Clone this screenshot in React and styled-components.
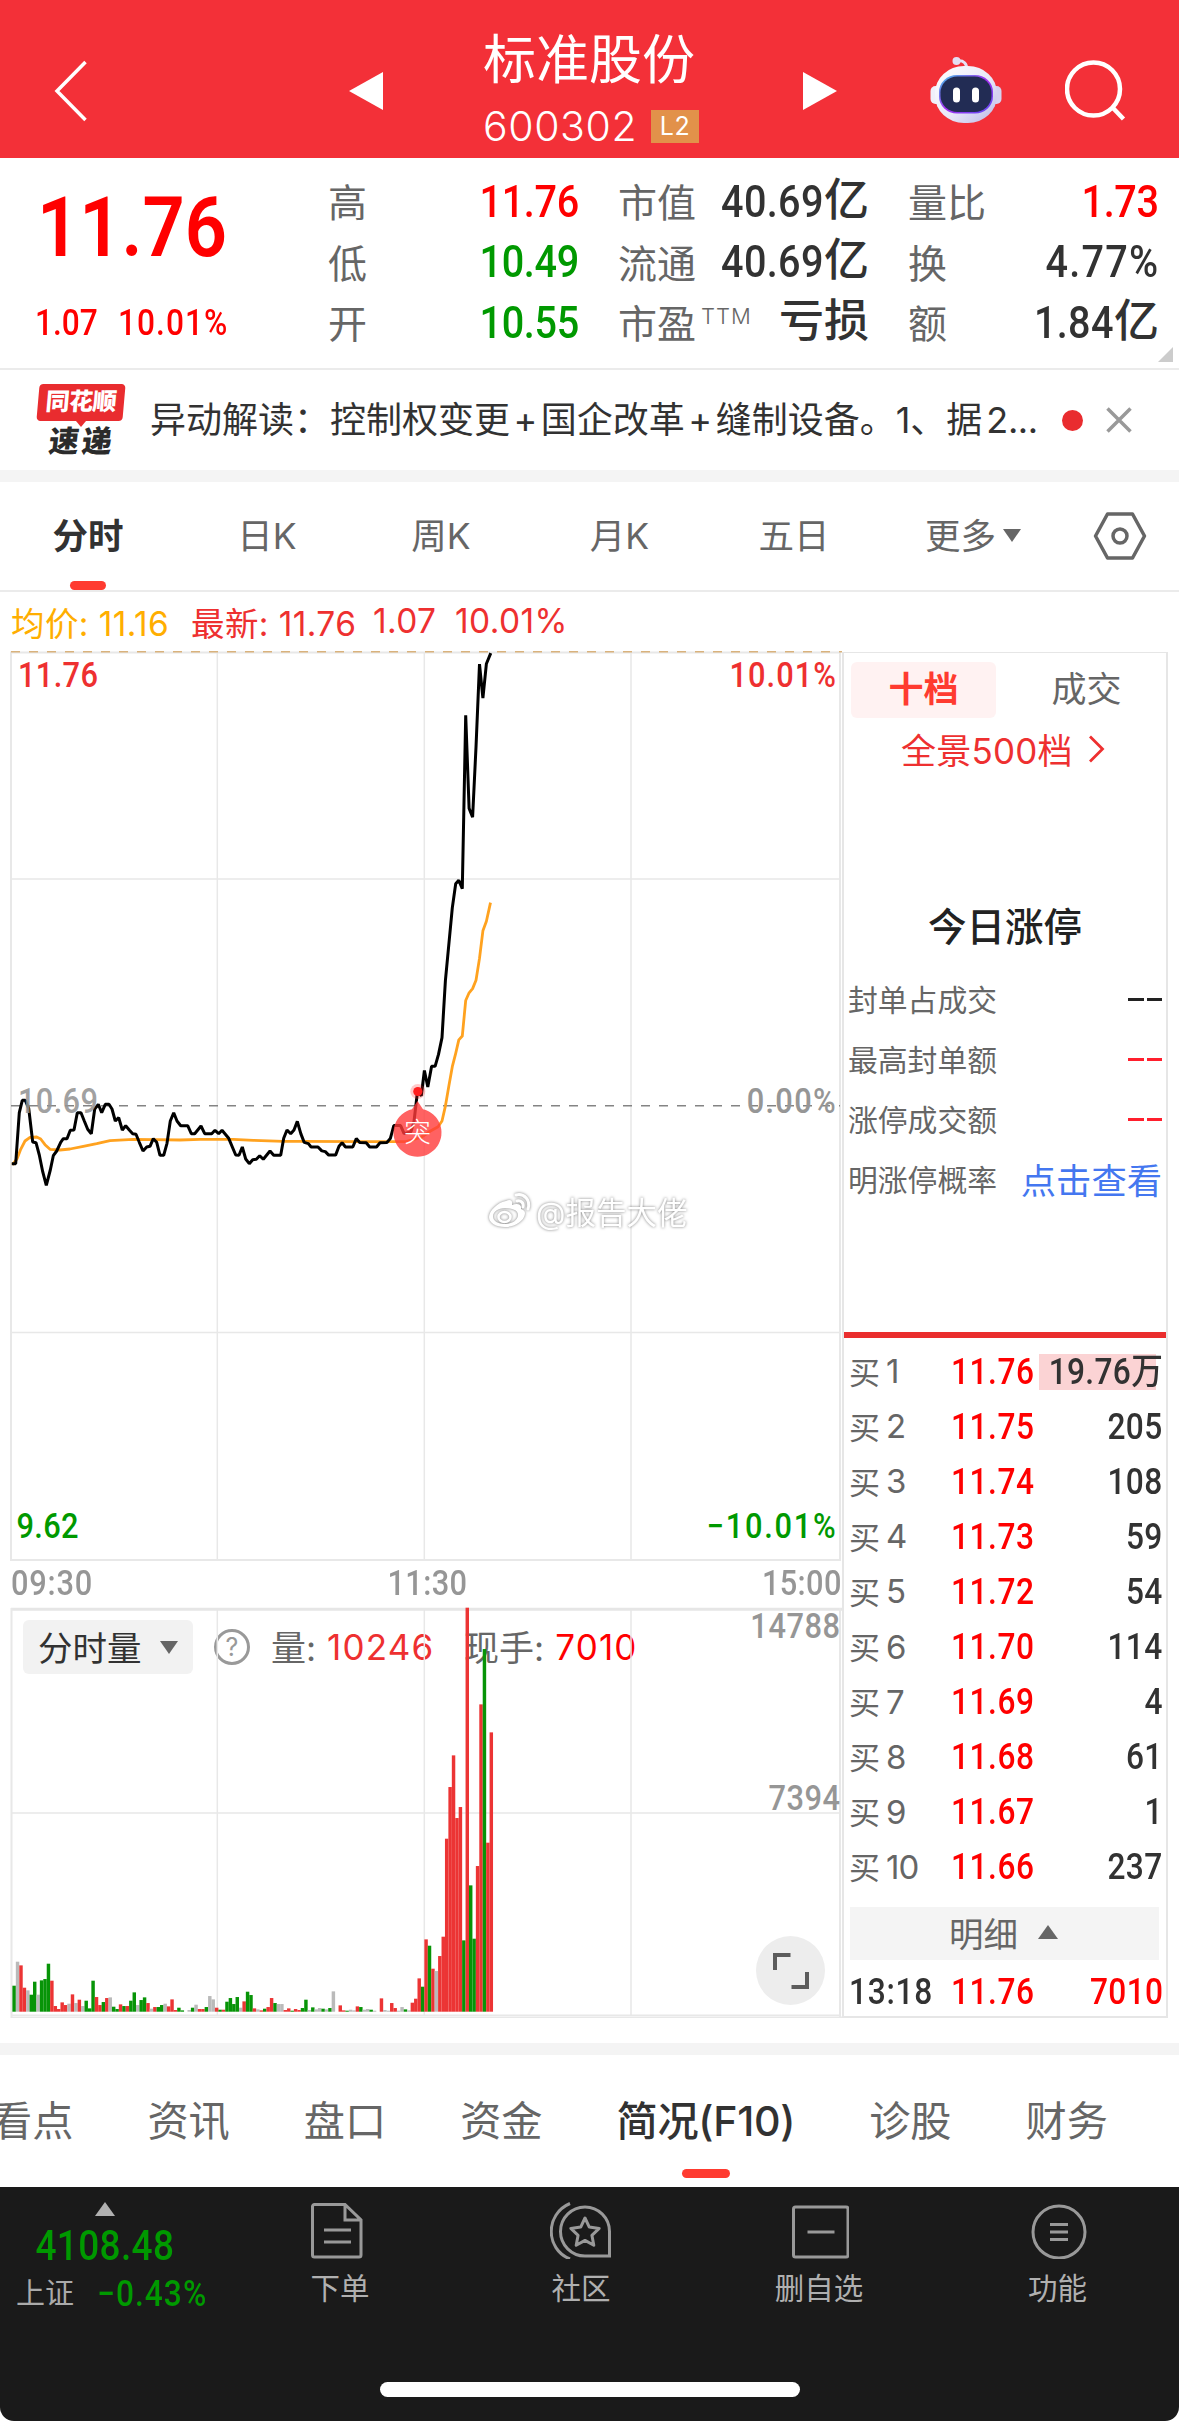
import React from "react";
import styled, { createGlobalStyle } from "styled-components";

const SANS = '"Inter", "Noto Sans CJK SC", sans-serif';
const DIN = '"Roboto", "Noto Sans CJK SC", sans-serif';
const C = {
  header: "#f33038",
  up: "#ff0000",
  red: "#ee3030",
  accent: "#ff3b30",
  down: "#009900",
  text: "#323232",
  sub: "#666666",
  mute: "#969696",
  line: "#e8e8e8",
  band: "#f4f4f4",
};

const Global = createGlobalStyle`
  * { box-sizing: border-box; }
  body { margin: 0; background: #fff; font-family: ${SANS}; color: ${C.text}; }
  svg { display: block; flex: none; }
`;

const Screen = styled.div`
  width: 1179px;
  height: 2421px;
  overflow: hidden;
  display: flex;
  flex-direction: column;
  background: #fff;
  white-space: nowrap;
`;

/* Narrow figures used for every quote number. */
const Din = styled.span`
  display: inline-block;
  font-family: ${DIN};
  font-size: ${(p) => p.$size || 36}px;
  font-weight: ${(p) => p.$weight || 500};
  letter-spacing: ${(p) => p.$spacing || 0}px;
  color: ${(p) => p.$color || "inherit"};
  transform: scaleX(0.88);
  transform-origin: ${(p) => p.$origin || "left"};
`;

/* ---------- header ---------- */
const Header = styled.header`
  height: 158px;
  flex: none;
  background: ${C.header};
  color: #fff;
  display: grid;
  grid-template-columns: 349px 34px 420px 34px 93px 72px 63px 64px;
  align-items: center;
  padding-top: 24px;
`;
const BackCell = styled.div`
  padding-left: 52px;
`;
const TitleStack = styled.div`
  width: 220px;
  margin: 0 auto;
  display: flex;
  flex-direction: column;
`;
const StockName = styled.h1`
  margin: 0;
  font-size: 53px;
  line-height: 70px;
  font-weight: 400;
`;
const CodeRow = styled.div`
  display: flex;
  align-items: center;
  justify-content: space-between;
  font-size: 41px;
  line-height: 62px;
  font-weight: 350;
  letter-spacing: 0.6px;
  padding-right: 4px;
`;
const LevelBadge = styled.span`
  width: 48px;
  height: 33px;
  background: #e2914a;
  font-size: 25px;
  line-height: 33px;
  font-weight: 400;
  text-align: center;
`;

/* ---------- quote board ---------- */
const Quote = styled.section`
  height: 212px;
  flex: none;
  display: flex;
  position: relative;
  border-bottom: 2px solid #ebebeb;
`;
const PriceBlock = styled.div`
  width: 328px;
  padding: 27px 0 0 37px;
  color: ${C.up};
`;
const BigPrice = styled.div`
  height: 84px;
  line-height: 84px;
  padding-top: 1px;
`;
const ChangeRow = styled.div`
  display: grid;
  grid-template-columns: 83px 1fr;
  margin: 36px 0 0 -2px;
  line-height: 36px;
`;
const StatGrid = styled.div`
  display: grid;
  grid-template-columns: 250px 250px 250px;
  grid-auto-rows: 60.5px;
  column-gap: 40px;
  padding-top: 12px;
`;
const Stat = styled.div`
  display: flex;
  align-items: center;
  justify-content: space-between;
`;
const StatLabel = styled.span`
  font-size: 39px;
  color: ${C.sub};
  display: flex;
`;
const Ttm = styled.span`
  font-size: 22px;
  line-height: 26px;
  margin: 10px 0 0 5px;
  font-weight: 300;
  letter-spacing: 1px;
`;
const StatValue = styled.span`
  display: flex;
  align-items: center;
  line-height: 52px;
  margin: 3px -1px 0 0;
  color: ${(p) => p.$color || C.text};
`;
const Unit = styled.span`
  font-size: 45px;
  font-weight: 500;
  margin-top: -4px;
`;
const Corner = styled.i`
  position: absolute;
  right: 6px;
  bottom: 6px;
  border-style: solid;
  border-width: 0 0 15px 15px;
  border-color: transparent transparent #ccc transparent;
`;

/* ---------- news ---------- */
const News = styled.section`
  height: 100px;
  flex: none;
  display: flex;
  align-items: center;
  padding-left: 36px;
`;
const NewsLogo = styled.div`
  width: 90px;
  display: flex;
  flex-direction: column;
  align-items: center;
  font-weight: 900;
`;
const LogoBox = styled.div`
  width: 86px;
  height: 37px;
  border-radius: 4px;
  background: #e92c2f;
  color: #fff;
  font-size: 24px;
  line-height: 36px;
  text-align: center;
  letter-spacing: -0.5px;
  transform: skewX(-5deg);
`;
const LogoTip = styled.i`
  border-style: solid;
  border-width: 6px 5px 0 5px;
  border-color: #e92c2f transparent transparent transparent;
`;
const LogoText = styled.div`
  font-size: 30px;
  line-height: 29px;
  letter-spacing: 3px;
  transform: skewX(-7deg);
  color: #2b2b2b;
  margin-left: 2px;
`;
const NewsText = styled.div`
  width: 886px;
  margin-left: 24px;
  font-size: 36px;
  line-height: 50px;
  color: ${C.text};
`;
const Plus = styled.span`
  margin: 0 3.5px;
`;
const Ellipsis = styled.span`
  margin-left: 4px;
  letter-spacing: -0.4px;
`;
const RedDot = styled.i`
  width: 21px;
  height: 21px;
  border-radius: 50%;
  background: #e92c2f;
  margin: 0 23px 0 26px;
`;
const Band = styled.div`
  height: 12px;
  flex: none;
  background: ${C.band};
`;

/* ---------- period tabs ---------- */
const PeriodTabs = styled.nav`
  height: 110px;
  flex: none;
  display: grid;
  grid-template-columns: 176px 182px 166px 191px 158px 200px 84px;
  align-items: center;
  border-bottom: 2px solid #ebebeb;
`;
const PeriodTab = styled.div`
  position: relative;
  height: 108px;
  padding-bottom: 5px;
  display: flex;
  align-items: center;
  justify-content: center;
  gap: 7px;
  font-size: 35.5px;
  font-weight: ${(p) => (p.$active ? 600 : 400)};
  color: ${(p) => (p.$active ? C.text : C.sub)};
`;
const Underline = styled.i`
  position: absolute;
  bottom: ${(p) => p.$bottom}px;
  left: 50%;
  width: ${(p) => p.$w}px;
  height: 9px;
  margin-left: ${(p) => -p.$w / 2}px;
  border-radius: 4.5px;
  background: ${C.accent};
`;
const Caret = styled.i`
  margin-top: ${(p) => (p.$up ? 0 : 3)}px;
  border-style: solid;
  border-width: ${(p) => (p.$up ? "0 10px 14px" : "13px 9.5px 0")};
  border-color: ${(p) =>
    p.$up
      ? `transparent transparent ${p.$color || C.sub}`
      : `${p.$color || C.sub} transparent transparent`};
`;

/* ---------- chart area ---------- */
const Legend = styled.div`
  height: 59px;
  flex: none;
  display: flex;
  align-items: center;
  padding: 0 0 1px 11px;
  font-size: 33.5px;
  letter-spacing: 0.4px;
  color: ${C.red};
`;
const LegendItem = styled.span`
  width: ${(p) => p.$w}px;
  color: ${(p) => p.$color || "inherit"};
`;
const Main = styled.section`
  height: 1392px;
  flex: none;
  display: flex;
`;
const Charts = styled.div`
  width: 842px;
  display: flex;
  flex-direction: column;
`;
const TimeAxis = styled.div`
  height: 46px;
  display: flex;
  justify-content: space-between;
  align-items: center;
  padding: 0 0 1px 11px;
  color: ${C.mute};
`;
const VolumeBox = styled.div`
  position: relative;
  height: 411px;
`;
const VolumeBar = styled.div`
  position: absolute;
  left: 23px;
  top: 13px;
  height: 54px;
  display: flex;
  align-items: center;
  font-size: 35px;
  color: ${C.sub};
`;
const Chip = styled.div`
  width: 170px;
  height: 54px;
  border-radius: 6px;
  background: #f2f2f2;
  display: flex;
  align-items: center;
  padding: 0 0 2px 15px;
  gap: 18px;
  font-size: 34.5px;
  color: ${C.text};
`;
const Help = styled.div`
  width: 36px;
  height: 36px;
  border: 3px solid #999;
  border-radius: 50%;
  margin: 0 21px 0 21px;
  font-size: 25px;
  line-height: 30px;
  text-align: center;
  color: #999;
`;
const VolLabel = styled.span`
  padding-bottom: 3px;
`;
const VolNumber = styled.span`
  color: ${(p) => p.$color};
  width: ${(p) => p.$w}px;
  margin-left: 11px;
  letter-spacing: 1.2px;
`;
const VolumeSvg = styled.svg`
  position: relative;
`;
const Expand = styled.div`
  position: absolute;
  right: 17px;
  bottom: 13px;
  width: 69px;
  height: 69px;
  border-radius: 50%;
  background: #ededed;
  display: flex;
  align-items: center;
  justify-content: center;
`;

/* ---------- order book ---------- */
const Book = styled.aside`
  width: 326px;
  height: 1366px;
  margin-top: 1px;
  border: 2px solid #e6e6e6;
  border-top-width: 1px;
  display: flex;
  flex-direction: column;
  > * { flex: none; }
`;
const BookTabs = styled.div`
  display: flex;
  gap: 18px;
  padding: 9px 0 0 7px;
`;
const BookTab = styled.div`
  width: 145px;
  height: 56px;
  border-radius: 6px;
  font-size: 35px;
  line-height: 55px;
  text-align: center;
  background: ${(p) => (p.$active ? "#fff2f2" : "transparent")};
  color: ${(p) => (p.$active ? C.accent : C.sub)};
  font-weight: ${(p) => (p.$active ? 600 : 400)};
`;
const PanoramaLink = styled.div`
  height: 64px;
  display: flex;
  align-items: center;
  gap: 15px;
  padding: 0 0 3px 57px;
  font-size: 35px;
  letter-spacing: 0.2px;
  color: ${C.red};
`;
const LimitTitle = styled.h2`
  margin: 120px 0 18px;
  font-size: 38.5px;
  line-height: 50px;
  font-weight: 500;
  text-align: center;
  color: #222;
`;
const LimitRow = styled.div`
  height: 60px;
  display: flex;
  align-items: center;
  justify-content: space-between;
  padding: 0 4px 4px 4px;
  font-size: 29.8px;
  color: ${C.sub};
`;
const Dashes = styled.span`
  display: flex;
  gap: 3px;
  margin-top: 2px;
  &::before,
  &::after {
    content: "";
    width: 15.5px;
    height: 3px;
    background: ${(p) => p.$color};
  }
`;
const LookLink = styled.a`
  font-size: 35.3px;
  color: #4477f0;
`;
const Divider = styled.hr`
  width: 322px;
  height: 6px;
  margin: 122px 0 6px;
  border: 0;
  background: #ea2e2e;
`;
const OrderRow = styled.div`
  height: ${(p) => (p.$last ? 56 : 55.1)}px;
  display: grid;
  grid-template-columns: 102px 86px 1fr;
  align-items: center;
  padding: ${(p) => (p.$last ? 8 : 0)}px 3px 0 5px;
`;
const Level = styled.span`
  display: flex;
  gap: 6px;
  align-items: center;
  font-size: 31px;
  padding-bottom: 3px;
  color: ${C.sub};
`;
const LevelNo = styled.span`
  font-size: 33px;
  padding-top: 2px;
  letter-spacing: -0.8px;
`;
const QtyCell = styled.span`
  min-width: 0;
  height: 36px;
  line-height: 36px;
  display: flex;
  justify-content: flex-end;
  margin-left: 2px;
  background: ${(p) =>
    p.$hot ? "linear-gradient(to right, #fbd3d4 117px, transparent 117px)" : "none"};
`;
const DetailBar = styled.div`
  height: 53px;
  margin: 12px 7px 0 6px;
  background: ${C.band};
  display: flex;
  align-items: center;
  justify-content: center;
  gap: 20px;
  font-size: 34.5px;
  color: ${C.sub};
  padding: 0 2px 2px 0;
`;

/* ---------- bottom ---------- */
const ContentTabs = styled.nav`
  height: 132px;
  flex: none;
  display: flex;
  gap: 74px;
  margin-left: -9px;
`;
const ContentTab = styled.div`
  position: relative;
  flex: none;
  line-height: 132px;
  font-size: 41.2px;
  font-weight: ${(p) => (p.$active ? 500 : 400)};
  color: ${(p) => (p.$active ? C.text : C.sub)};
  letter-spacing: ${(p) => (p.$active ? "-0.3px" : 0)};
`;
const Dock = styled.footer`
  height: 234px;
  flex: none;
  background: #1a1a1a;
  border-radius: 0 0 14px 14px;
  display: flex;
  flex-direction: column;
  align-items: center;
`;
const DockRow = styled.div`
  width: 1179px;
  height: 195px;
  display: grid;
  grid-template-columns: 220px 240px 242px 234px 243px;
`;
const IndexCell = styled.div`
  display: flex;
  flex-direction: column;
  align-items: center;
  padding: 15px 10px 0 0;
`;
const IndexValue = styled.div`
  margin-top: 9px;
  height: 42px;
  line-height: 42px;
  color: ${C.down};
`;
const IndexChange = styled.div`
  margin-top: 7px;
  width: 210px;
  padding-left: 16px;
  display: flex;
  align-items: center;
  gap: 23px;
  font-size: 29px;
  line-height: 40px;
  color: #aaa;
`;
const DockItem = styled.div`
  display: flex;
  flex-direction: column;
  align-items: center;
  padding-top: 12px;
  gap: 5px;
  font-size: 29.5px;
  line-height: 48px;
  color: #b0b0b0;
`;
const HomeBar = styled.div`
  width: 420px;
  height: 15px;
  border-radius: 7.5px;
  background: #fff;
`;

/* ---------- data ---------- */
const STATS = [
  ["高", "11.76", "", C.up], ["市值", "40.69", "亿"], ["量比", "1.73", "", C.up],
  ["低", "10.49", "", C.down], ["流通", "40.69", "亿"], ["换", "4.77%", ""],
  ["开", "10.55", "", C.down], ["市盈", "", "亏损"], ["额", "1.84", "亿"],
];

const ORDERS = [
  ["11.76", "19.76万"], ["11.75", "205"], ["11.74", "108"], ["11.73", "59"],
  ["11.72", "54"], ["11.70", "114"], ["11.69", "4"], ["11.68", "61"],
  ["11.67", "1"], ["11.66", "237"],
];

const PRICE =
  "13.3,512.7 15.7,512.7 19.3,461.7 22.3,449.3 25.3,449.3 28.7,457.3 32.7,491 36,491.7 39.3,504 42.7,520.7 46.3,534.3 50.3,519 53.3,504.7 56.7,500 60.7,491.3 63.3,487.7 67,487.7 70.3,479.3 74,479 77.3,461.7 81,461.7 84.3,470 87.7,478.3 91.3,482.7 94.7,458 98.3,453.3 101.7,461.7 105.3,453.3 109,453.3 112,458 115.3,470 118.7,466.7 122.3,479 125.7,474.7 129.3,479 132.7,482.7 136,483.3 139.3,491.3 143,500 146.7,496 150,495.3 153.3,487.7 156.7,491.3 160,504.3 163.7,504.3 167,492.3 170.3,470 173.7,461.7 177,470 180.7,474.7 187.7,474.7 191.3,482.7 194.7,482.7 201,475 204.7,482.7 211.7,482.7 215,479.3 218.7,482.7 222,479.3 228.7,487.3 235.7,504 239,504.3 242.3,496 245.7,508 249.3,512.7 252.7,508.7 256.3,508.3 259.7,504.7 263.3,508.3 270,500 273.7,504.3 280.7,504.3 283.7,487.3 287,479 290.7,482.7 294,479 297.3,470.4 300.8,482.6 304.2,491.4 308.4,492.6 311.1,496 318,496 321.8,499.9 325.3,500.6 328.7,504.1 335.6,504.1 339,495.3 342.1,491.8 345.5,496 352.8,496 356.3,487.6 359.7,491.4 366.2,491.8 369.7,496 376.5,496 380,491.8 386.9,491.4 390.3,487.6 393.8,474.6 400.6,474.6 404.1,482.6 411,480.7 414,470.4 417.5,440.5 421.3,444.7 424.4,419.5 427.8,436 431.6,415.3 435.1,415.3 438.5,403.4 442,386.6 445.4,329.6 452.3,256.9 455.7,232.8 458.8,229.3 462.3,237.7 465.7,64.4 469.1,157.4 472.6,166.2 476,96.1 479.5,13.1 482.9,47.2 486.4,12.7 490.2,3.5";

const AVERAGE =
  "13.3,512.7 17.3,507.3 20.7,498.3 25,490 30,486.3 36.7,486 40.7,488 45,493.7 50,498.3 60,499 70,498 83.3,495.3 96.7,492.7 110,489.7 133.3,488.3 153.3,488.7 180,489 200,488.3 233.3,488.3 253.3,489.3 283.3,490.3 300,490.3 363.5,490.7 405.6,490.7 420.9,486.5 430.5,480 438.1,475.7 442,470 445.4,455.1 448.9,434.8 452.3,415.7 455.7,402.3 458.8,388.9 462.3,385 465.7,349.5 469.1,341.8 472.6,337.6 476,329.2 479.5,307.4 482.9,279.8 486.4,270.3 490.2,253";

// One entry per minute: colour key (g down, r up, n flat) and height in thirds of a pixel.
const VOLUME =
  "g78 n150 r139 r72 n64 g51 g90 n51 g94 g98 g144 r93 r17 r8 r28 r20 n24 r52 n26 r36 n17 g33 g10 g93 r44 r20 g29 r41 n43 g15 g8 r22 g17 r17 g33 g58 n20 g35 g43 r26 n9 r14 g14 g20 n24 r16 r37 r5 g12 g4 n0 n5 g12 n21 r8 r8 g14 n47 n37 r12 g6 r6 g30 g41 g23 g44 n12 r31 g60 g50 r10 n7 r4 g9 r14 r41 g26 n23 n23 r5 r10 g3 r8 r5 g11 g36 n5 g13 n7 n11 g9 n7 g11 n61 n0 r19 r4 g3 n6 n4 r16 g14 n6 n8 g6 n3 n0 r40 n5 n3 r26 r11 n3 n14 g7 n4 r27 r39 r100 g75 r217 g198 r129 n122 r167 r225 r519 r674 r769 r581 r614 g214 r1212 g379 g219 r437 r922 g1088 r507 r838"
    .split(" ")
    .map((s) => [s[0], Number(s.slice(1)) / 3]);
const VOL_COLOR = { g: "#079407", r: "#ec3434", n: "#bababa" };

const AxisText = styled.text`
  font-family: ${DIN};
  font-size: 35px;
  font-weight: 500;
  letter-spacing: ${(p) => p.$spacing || 0}px;
  fill: ${(p) => p.$fill};
`;
const MarkText = styled.text`
  font-family: ${SANS};
  font-size: 27px;
  font-weight: 300;
  fill: #fff;
`;
const Watermark = styled.g`
  font-family: ${SANS};
  font-size: 30.5px;
  filter: drop-shadow(0 0 1.5px rgba(0, 0, 0, 0.5));
`;

function ChartText({ x, y, fill, end, opacity, spacing, children }) {
  return (
    <g transform={`translate(${x} ${y}) scale(0.88 1)`}>
      <AxisText $fill={fill} $spacing={spacing} fillOpacity={opacity} textAnchor={end ? "end" : "start"}>
        {children}
      </AxisText>
    </g>
  );
}

function PriceChart() {
  return (
    <svg width="842" height="910" viewBox="0 0 842 910">
      <g stroke={C.line} strokeWidth="1.5" fill="none">
        <path d="M11 228H840M11 681.5H840M217.3 1.5V909M424.3 1.5V909M631 1.5V909" />
        <path d="M11 1.5H840V909H11Z" strokeWidth="2" />
      </g>
      <path d="M11 0.7H842" stroke="#d9b27c" strokeWidth="1.4" strokeDasharray="9 9" />
      <path d="M11 454.7H840" stroke="#848484" strokeWidth="1.6" strokeDasharray="9 9" />
      <ChartText x={18} y={36} spacing={0.4} fill={C.red}>11.76</ChartText>
      <ChartText x={837} y={36} end spacing={1.2} fill={C.red}>10.01%</ChartText>
      <ChartText x={837} y={461.5} end spacing={1.5} fill={C.mute}>0.00%</ChartText>
      <ChartText x={16.5} y={887} spacing={0.4} fill={C.down}>9.62</ChartText>
      <ChartText x={837.5} y={887} end spacing={2} fill={C.down}>−10.01%</ChartText>
      <g fill="none" strokeLinejoin="round" strokeLinecap="square">
        <polyline points={AVERAGE} stroke="#ffa21f" strokeWidth="2.8" />
        <polyline points={PRICE} stroke="#000" strokeWidth="3" strokeLinejoin="bevel" />
      </g>
      <ChartText x={18} y={461.5} spacing={0.4} opacity={0.88} fill="#949494">10.69</ChartText>
      <circle cx="417.8" cy="440.5" r="7.5" fill="#ff2a2a" fillOpacity="0.25" />
      <circle cx="417.8" cy="440.5" r="4.6" fill="#ff1f1f" />
      <path
        d="M417.5 450L423 458.3A24 24 0 1 1 412 458.3Z"
        fill="#ff3b3b"
        fillOpacity="0.8"
      />
      <MarkText x="417.5" y="491" textAnchor="middle">突</MarkText>
      <Watermark>
        <g transform="translate(489 542)" fill="none" stroke="#fff" strokeWidth="3">
          <path
            fill="#fff"
            stroke="none"
            fillRule="evenodd"
            d="M17 8c4-2 7-1 6 4 5-2 10-1 9 4 4 1 5 4 3 8-3 6-11 10-19 10C7 34 0 30 0 24 0 18 9 9 17 8ZM16 15C9 15 4 19 4 23.500s5 7.500 12 7.500 13-4 13-9-6-7-13-7Z"
          />
          <ellipse cx="15.500" cy="24" rx="6" ry="5" strokeWidth="2.500" />
          <path d="M27 2c8-2 15 5 12 14M28 8c4-1 7 2 6 6" strokeLinecap="round" />
        </g>
        <text x="536" y="572.5" fill="#fff">@报告大佬</text>
      </Watermark>
    </svg>
  );
}

function VolumeChart() {
  return (
    <VolumeSvg width="842" height="411" viewBox="0 0 842 411">
      <g stroke={C.line} strokeWidth="1.5" fill="none">
        <path d="M11 206H840M217.3 2V408M424.3 2V408M631 2V408M11 408.300H840" />
        <path d="M11 410.300H842" />
        <path d="M11 2.300H842" stroke="#e6e6e6" strokeWidth="3" />
        <path d="M11.500 1V411M840 1V411" strokeWidth="2" />
      </g>
      <ChartText x={840.5} y={31} end spacing={0.6} fill={C.mute}>14788</ChartText>
      <ChartText x={840.5} y={202.5} end spacing={0.6} fill={C.mute}>7394</ChartText>
      {VOLUME.map(([k, h], i) => (
        <rect
          key={i}
          x={12.4 + i * 3.433}
          y={404.7 - h}
          width={3.45}
          height={h}
          fill={VOL_COLOR[k]}
        />
      ))}
    </VolumeSvg>
  );
}

function Robot() {
  return (
    <svg width="72" height="68" viewBox="0 0 72 68">
      <defs>
        <linearGradient id="shell" x1="0" y1="0" x2="1" y2="1">
          <stop offset="0" stopColor="#fff" />
          <stop offset="0.55" stopColor="#e9e8f8" />
          <stop offset="1" stopColor="#b9b8e6" />
        </linearGradient>
        <linearGradient id="rim" x1="0" y1="0" x2="1" y2="1">
          <stop offset="0" stopColor="#3fc4e8" />
          <stop offset="0.5" stopColor="#a52ff0" />
          <stop offset="1" stopColor="#5b4df2" />
        </linearGradient>
      </defs>
      <path d="M27 4c7-1 10 3 9.500 8" fill="none" stroke="#e6e3f5" strokeWidth="3" />
      <circle cx="26.500" cy="4" r="4" fill="#e4def2" />
      <rect x="0.500" y="29" width="12" height="18" rx="5" fill="#f0effa" />
      <rect x="59.500" y="29" width="12" height="18" rx="5" fill="#d5d2f0" />
      <rect x="5" y="9" width="62" height="57" rx="29" ry="27" fill="url(#shell)" />
      <rect x="9" y="18" width="54" height="38.500" rx="18" ry="17" fill="url(#rim)" />
      <rect x="10.500" y="19.500" width="51" height="35.500" rx="17" ry="16" fill="#222c54" />
      <rect x="23" y="30.500" width="7" height="15" rx="3.500" fill="#fff" />
      <rect x="42" y="30.500" width="7" height="15" rx="3.500" fill="#fff" />
    </svg>
  );
}

function DocIcon() {
  return (
    <svg width="60" height="60" viewBox="0 0 60 60" fill="none" stroke="#999" strokeWidth="3">
      <path d="M4.500 5.500H35L51 21V56a2 2 0 0 1-2 2H4.500a2 2 0 0 1-2-2V7.500a2 2 0 0 1 2-2ZM35 5.500V21H51M14 31H41M14 43H41" />
    </svg>
  );
}
function CommunityIcon() {
  return (
    <svg width="62" height="60" viewBox="0 0 62 60" fill="none" stroke="#999" strokeWidth="3">
      <path d="M20 4.500C-5 15-5 50 20 60M59.500 57H35A24.500 24.500 0 1 1 59.500 32.500Z" />
      <path
        d="M35 19l4.300 9.100 9.900 1.300-7.300 6.900 1.900 9.900L35 41.400l-8.800 4.800 1.900-9.900-7.300-6.900 9.900-1.300Z"
        strokeLinejoin="round"
      />
    </svg>
  );
}
function RemoveIcon() {
  return (
    <svg width="60" height="60" viewBox="0 0 60 60" fill="none" stroke="#999" strokeWidth="3">
      <rect x="4.500" y="8" width="54.500" height="50" rx="2" />
      <path d="M18.500 33H45.500" />
    </svg>
  );
}
function MenuIcon() {
  return (
    <svg width="60" height="60" viewBox="0 0 60 60" fill="none" stroke="#999" strokeWidth="3">
      <circle cx="31" cy="33" r="26" />
      <path d="M22 25.500H40M22 33H40M22 40.500H40" />
    </svg>
  );
}

const DOCK = [
  ["下单", DocIcon],
  ["社区", CommunityIcon],
  ["删自选", RemoveIcon],
  ["功能", MenuIcon],
];

export default function App() {
  return (
    <Screen>
      <Global />
      <Header>
        <BackCell>
          <svg width="36" height="62" viewBox="0 0 36 62" fill="none" stroke="#fff" strokeWidth="3.500">
            <path d="M33.500 2L5 31L33.500 60" />
          </svg>
        </BackCell>
        <svg width="34" height="38" viewBox="0 0 34 38"><path d="M34 0V38L0 19Z" fill="#fff" /></svg>
        <TitleStack>
          <StockName>标准股份</StockName>
          <CodeRow>
            600302<LevelBadge>L2</LevelBadge>
          </CodeRow>
        </TitleStack>
        <svg width="34" height="38" viewBox="0 0 34 38"><path d="M0 0V38L34 19Z" fill="#fff" /></svg>
        <span />
        <Robot />
        <span />
        <svg width="62" height="62" viewBox="0 0 62 62" fill="none" stroke="#fff" strokeWidth="4.500">
          <circle cx="28.500" cy="29" r="26.500" />
          <path d="M48 48L58.500 59" />
        </svg>
      </Header>

      <Quote>
        <PriceBlock>
          <BigPrice><Din $size={84} $weight={600}>11.76</Din></BigPrice>
          <ChangeRow><Din>1.07</Din><Din $spacing={1.2}>10.01%</Din></ChangeRow>
        </PriceBlock>
        <StatGrid>
          {STATS.map(([label, value, unit, color]) => (
            <Stat key={label}>
              <StatLabel>{label}{label === "市盈" && <Ttm>TTM</Ttm>}</StatLabel>
              <StatValue $color={color}>
                {value && (
                  <Din
                    $size={45}
                    $origin="right"
                    $spacing={value.endsWith("%") ? 1.4 : unit ? 0.4 : -0.4}
                  >
                    {value}
                  </Din>
                )}
                {unit && <Unit>{unit}</Unit>}
              </StatValue>
            </Stat>
          ))}
        </StatGrid>
        <Corner />
      </Quote>

      <News>
        <NewsLogo>
          <LogoBox>同花顺</LogoBox>
          <LogoTip />
          <LogoText>速递</LogoText>
        </NewsLogo>
        <NewsText>
          异动解读：控制权变更<Plus>+</Plus>国企改革<Plus>+</Plus>缝制设备。1、据<Ellipsis>2...</Ellipsis>
        </NewsText>
        <RedDot />
        <svg width="26" height="26" viewBox="0 0 26 26" stroke="#999" strokeWidth="3.500">
          <path d="M1.500 1.500L24.500 24.500M24.500 1.500L1.500 24.500" />
        </svg>
      </News>
      <Band />

      <PeriodTabs>
        <PeriodTab $active>分时<Underline $w={36} $bottom={0} /></PeriodTab>
        <PeriodTab>日K</PeriodTab>
        <PeriodTab>周K</PeriodTab>
        <PeriodTab>月K</PeriodTab>
        <PeriodTab>五日</PeriodTab>
        <PeriodTab>更多<Caret /></PeriodTab>
        <svg width="88" height="50" viewBox="-4.500 0 88 50" fill="none" stroke="#666" strokeWidth="3.500">
          <path d="M30 3H55L67 25L55 47H30L18 25Z" strokeLinejoin="round" />
          <circle cx="42.500" cy="25" r="7" />
        </svg>
      </PeriodTabs>

      <Legend>
        <LegendItem $w={180} $color="#ffae00">均价: 11.16</LegendItem>
        <LegendItem $w={182}>最新: 11.76</LegendItem>
        <LegendItem $w={82}>1.07</LegendItem>
        <LegendItem $w={120}>10.01%</LegendItem>
      </Legend>

      <Main>
        <Charts>
          <PriceChart />
          <TimeAxis>
            <Din $size={35} $spacing={0.9}>09:30</Din>
            <Din $size={35} $spacing={0.4} $origin="center">11:30</Din>
            <Din $size={35} $spacing={0.4} $origin="right">15:00</Din>
          </TimeAxis>
          <VolumeBox>
            <VolumeBar>
              <Chip>分时量<Caret /></Chip>
              <Help>?</Help>
              <VolLabel>量:</VolLabel>
              <VolNumber $color={C.red} $w={137}>10246</VolNumber>
              <VolLabel>现手:</VolLabel>
              <VolNumber $color={C.up} $w={90}>7010</VolNumber>
            </VolumeBar>
            <VolumeChart />
            <Expand>
              <svg width="36" height="36" viewBox="0 0 36 36" fill="none" stroke="#5c5c5c" strokeWidth="4">
                <path d="M2 17V2H17.500M34 19V34H18.500" />
              </svg>
            </Expand>
          </VolumeBox>
        </Charts>

        <Book>
          <BookTabs>
            <BookTab $active>十档</BookTab>
            <BookTab>成交</BookTab>
          </BookTabs>
          <PanoramaLink>
            全景500档
            <svg width="17" height="28" viewBox="0 0 17 28" fill="none" stroke={C.red} strokeWidth="2.800">
              <path d="M2 1.500L14.500 14L2 26.500" />
            </svg>
          </PanoramaLink>
          <LimitTitle>今日涨停</LimitTitle>
          <LimitRow>封单占成交<Dashes $color="#222" /></LimitRow>
          <LimitRow>最高封单额<Dashes $color="#ff1f2d" /></LimitRow>
          <LimitRow>涨停成交额<Dashes $color="#ff1f2d" /></LimitRow>
          <LimitRow>明涨停概率<LookLink>点击查看</LookLink></LimitRow>
          <Divider />
          {ORDERS.map(([price, qty], i) => (
            <OrderRow key={price}>
              <Level>买<LevelNo>{i + 1}</LevelNo></Level>
              <Din $color={C.up} $spacing={0.6}>{price}</Din>
              <QtyCell $hot={i === 0}>
                <Din $origin="right" $spacing={0.4}>{qty}</Din>
              </QtyCell>
            </OrderRow>
          ))}
          <DetailBar>明细<Caret $up /></DetailBar>
          <OrderRow $last>
            <Din $spacing={0.8}>13:18</Din>
            <Din $color={C.up} $spacing={0.6}>11.76</Din>
            <QtyCell><Din $color={C.up} $origin="right" $spacing={0.4}>7010</Din></QtyCell>
          </OrderRow>
        </Book>
      </Main>
      <Band />

      <ContentTabs>
        {["看点", "资讯", "盘口", "资金"].map((t) => <ContentTab key={t}>{t}</ContentTab>)}
        <ContentTab $active>简况(F10)<Underline $w={48} $bottom={9} /></ContentTab>
        <ContentTab>诊股</ContentTab>
        <ContentTab>财务</ContentTab>
      </ContentTabs>

      <Dock>
        <DockRow>
          <IndexCell>
            <Caret $up $color="#b0b0b0" />
            <IndexValue><Din $size={42} $origin="center" $spacing={0.4}>4108.48</Din></IndexValue>
            <IndexChange>上证<Din $color={C.down} $spacing={1.2}>−0.43%</Din></IndexChange>
          </IndexCell>
          {DOCK.map(([label, Icon]) => (
            <DockItem key={label}><Icon />{label}</DockItem>
          ))}
        </DockRow>
        <HomeBar />
      </Dock>
    </Screen>
  );
}
